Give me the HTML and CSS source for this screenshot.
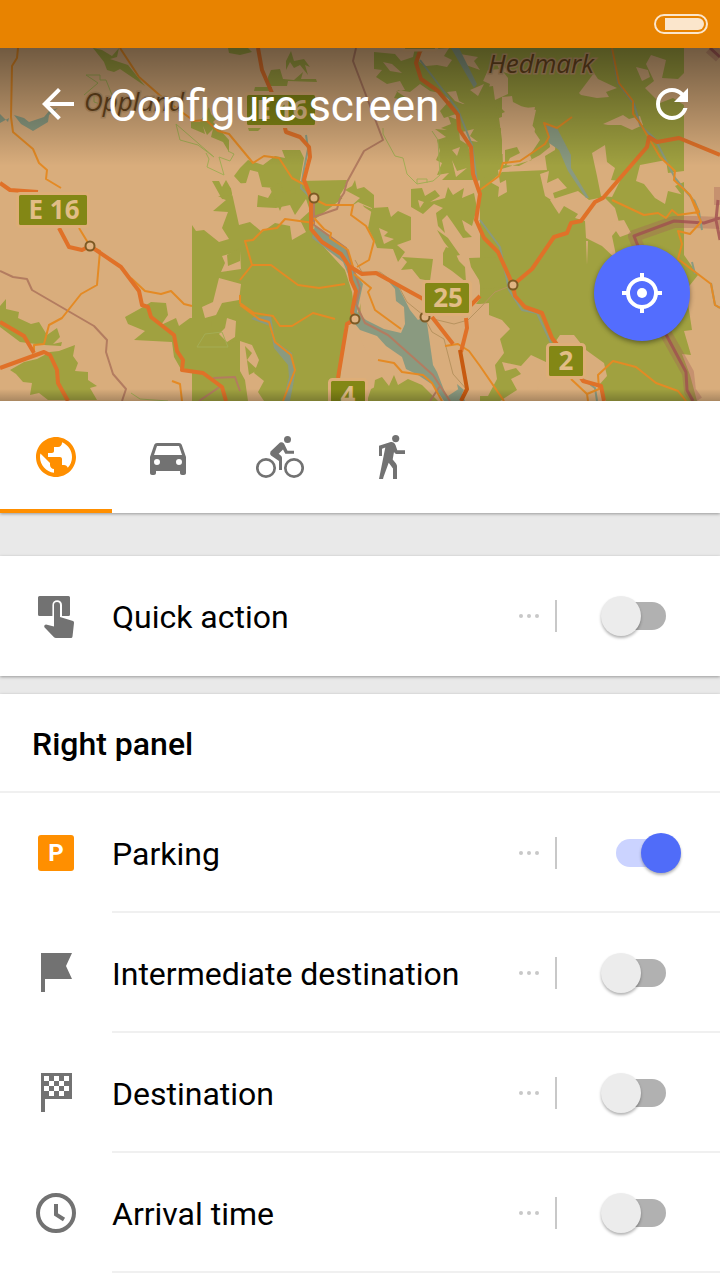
FILE: index.html
```html
<!DOCTYPE html>
<html lang="en">
<head>
<meta charset="utf-8">
<meta name="viewport" content="width=device-width, initial-scale=1">
<title>Configure screen</title>
<link rel="stylesheet" href="styles.css">
</head>
<body>
<div class="status-bar">
  <svg class="battery" viewBox="0 0 54 20" aria-hidden="true"><rect x="1" y="1" width="52" height="18" rx="9" fill="none" stroke="currentColor" stroke-width="2"/><path d="M11 4H44a6 6 0 0 1 0 12H11z" fill="currentColor"/></svg>
</div>
<header class="hero">
  <svg class="map" viewBox="0 48 720 353" preserveAspectRatio="xMidYMid slice" aria-hidden="true">
    <defs>
      <linearGradient id="shade" x1="0" y1="0" x2="0" y2="1"><stop offset="0" stop-opacity=".48"/><stop offset="1" stop-opacity="0"/></linearGradient>
      <linearGradient id="edge" x1="0" y1="0" x2="0" y2="1"><stop offset="0" stop-opacity="0"/><stop offset="1" stop-opacity=".22"/></linearGradient>
    </defs>
    <rect class="land" y="48" width="720" height="353"/>
    <g class="forest">
      <path d="M93 48L102 50 112 56 119 48 117 57 110 59 128 65 145 86 120 69 114 72 107 70 104 62zM228 48H248L252 52 240 55 229 53zM268 77L271 70 280 69 283 79 294 80 303 72 301 79 316 79 317 82 288 81 287 86 268 86zM286 61L291 51 294 61 304 59 310 67 305 65 308 75 300 65 294 68 290 62 286 70zM255 87H272V91H254zM248 128H261L258 131H249zM191 122L200 122 209 107 211 114 216 119 213 122 229 140V152L223 142 211 137 213 129 207 135 203 126 205 134 191 128zM212 181L219 181 222 187 226 180 233 192 230 200 222 199z"/>
      <path d="M240 168L248 160 263 165 275 156 285 158 282 150 300 150 304 158 300 181 347 180 345 187 340 195 344 201 355 202 372 209 374 240 345 270 376 330 396 401H192V225L196 231 204 230 219 242 229 239 222 228 228 212 213 211 226 200 218 196 238 195 228 188 244 187 234 176z"/>
      <path d="M480 48H684V255L698 275 686 290 692 330 684 331 691 355 682 354 690 375 697 401H480zM125 317L143 307 151 302 166 303 168 315 161 325 176 318 179 326 190 318 211 318 213 338 244 343V401H192V371L182 371 174 357 172 342 134 340 145 331 128 324zM0 306L6 299 6 309 19 312 18 318 31 324 39 322 47 335 57 328 60 337 53 344 62 342 61 346 44 345 20 342 0 327zM10 370L24 362 37 359 50 352 59 351 75 345 73 356 78 363 75 371 88 372 88 380 97 386 90 388 97 400H48L39 393 30 395 32 383 23 382 16 374z"/>
    </g>
    <g class="clearing">
      <path d="M343 198L349 199 354 190 364 207 390 224 400 245 387 273 372 274 365 290 355 322 361 328 384 341 411 363 402 374 391 382 380 379 379 385 371 389 367 401H338L345 325 355 314 352 292 345 270 313 235 314 220z"/>
      <path d="M360 272H407L426 283 424 310 460 320 470 352 450 401H390L361 340z"/>
      <path d="M480 304L489 303 489 315 502 320 510 329 500 339 504 353 495 365 497 379 488 396 480 396zM502 97L512 96 513 102 525 108 535 107 533 117 526 117 535 129 533 144 525 143 520 157 502 154zM488 70L501 69 508 78 508 94 495 100 493 86 480 88zM547 170L545 156 555 150 557 129 549 140 550 147 540 155 519 166 503 165 502 140 499 118 510 114 505 102 536 110 532 128 540 140 530 155 532 160 498 170 500 183 506 180 507 192 498 197 499 187 490 182 502 172zM579 93L594 73 598 79 617 88 606 92 609 97 597 98 581 95zM603 124L623 115 629 119 640 116 643 125 632 130 621 125 608 125zM651 55L666 60 662 78 678 79 684 73V105L673 98 660 103 645 88 654 81 646 64zM592 153L605 145 607 162 615 168 611 180 620 181 612 197 601 196 597 176zM540 174L549 171 547 183 558 178 567 188 553 193 556 203 545 196zM550 200L578 191 589 200 604 197 615 208 620 226 612 236 617 260 602 246 586 238 585 221 575 218 578 214 564 206 559 214 555 208zM640 165L666 160 668 173 684 171V195L668 191 665 204 655 198 644 184 636 181zM500 401L517 390 511 379 521 374 516 368 505 371 502 362 521 366 531 355 546 362 551 348 560 335 574 335 586 350 604 363 607 376 599 385 606 401z"/>
      <path d="M222 256L240 251 241 269 221 272 225 263zM219 278L241 284 239 300 222 303 216 315 205 318 202 307 213 302zM230 184L246 183 250 170 258 172 262 187 274 188 268 198 258 195 257 207 276 208 290 205 295 215 306 199 310 211 300 220 306 232 292 240 290 226 275 223 262 232 250 222 239 225zM240 341L252 345 259 360 254 373 264 381 258 392 264 401 248 401 245 380 240 371zM227 318L236 321 235 337 227 342 219 334 225 328z"/>
      <path d="M610 222L624 220 631 233 620 237zM586 241L587 265 588 241zM554 354L547 373 536 392 545 364zM636 67L648 70 650 77 642 81z"/>
    </g>
    <g class="forest">
      <path d="M374 52L395 54 401 61 413 57 415 48H481V80L490 84 487 94 480 92 481 109H474L459 101 456 91 447 92 455 101 463 104 480 105 502 109 505 112 495 116 498 127 490 130 501 128 499 151 502 161 493 172 482 180 475 181 470 150 458 128 456 114 444 118 440 111 450 100 440 93 430 91 420 84 410 92 398 90 394 98 413 102 396 91 405 90 400 81 387 84 376 77 382 70 374 69z"/>
      <path d="M441 128L451 124 448 116 458 120 460 140 468 145 473 166 475 180H442L449 173 437 175 442 163 436 160 440 151 437 140 446 137 435 129 447 130zM411 189L422 188 425 196 435 190 440 196 430 202 445 198 448 187 453 195 464 188 462 198 474 193 477 208 472 226 462 220 465 230 472 237 463 238 452 222 447 215 442 220 445 233 438 226 436 213 443 208 434 204 423 214 411 207zM443 253L446 247 454 250 459 261 465 267 466 282 452 271 443 265zM437 230L448 238 460 255 455 256 444 242zM345 190L352 186 355 180 357 189 364 187 374 195V209L358 202 350 207 360 198zM372 208L388 207 391 217 398 211 411 217V240L397 245 405 252 398 262 393 249 377 248 374 240 368 228zM402 257L433 259 430 281 420 279 412 269 401 270 407 262zM469 258L498 257 509 287 480 289V304H476L482 296 479 280 471 267zM372 401L375 380 382 377 389 386 394 375 398 385 408 379 422 385 438 401z"/>
      <path d="M505 150L517 147 520 153 510 158 505 168zM631 105L641 110 632 113zM675 186L684 182V198zM609 150L618 150 613 158zM245 346L252 353 247 360 258 370 249 375zM227 255L240 248V261L228 266zM270 188L281 182 283 193 295 188 296 204 284 200 280 211z"/>
    </g>
    <g class="clearing">
      <path d="M416 58L424 50 449 48 444 56 452 60 447 67 437 65 426 66 421 63zM460 54L478 57 474 61 480 70 466 65zM383 62L392 64 402 73 390 71zM462 132L474 129 470 136 478 142 466 140zM452 150L460 147 457 156zM452 160L457 171 467 168 456 177zM496 62L506 60 503 65 510 74 500 71zM470 90L484 84 478 96zM379 228L388 232 384 236 394 239 384 244zM418 200L424 202 420 208z"/>
    </g>
    <path class="water" d="M0 114L8 122 9 118 0 123zM14 115L24 118 29 122 44 117 49 111 58 108 49 115 48 122 33 131 21 124zM546 125L557 128 571 155V168L589 198 586 198 568 171 559 150 549 143zM451 48H459L477 84 474 88zM315 225L347 248 354 271 363 284 357 312 366 320 384 329 401 333 405 324 404 307 396 301 395 289 389 282 397 284 410 310 418 320 426 316 433 365 437 372 446 395 452 401 444 401 433 385 418 375 406 369 402 357 386 346 377 336 360 330 351 319 355 291 343 262 312 238zM254 317L271 316 275 341 292 353 295 375 290 401H283L289 377 288 365 274 348 270 326 251 319zM457 384L464 390 460 398zM448 396L460 388 465 401H450z"/>
    <g class="hairline">
      <path d="M84 95L98 83 86 75H100V80L106 80 112 95M94 96L94 102 100 104M176 124L214 157 198 145 180 140zM206 153L209 159 207 167 224 175 219 157 230 161 234 154 228 151M383 128V134L395 156 403 158 407 174 417 184 433 181 440 175 438 140 432 131M417 184V179H427V183M131 393L140 399 168 401M197 347L205 334 222 332 228 347z"/>
    </g>
    <g class="border-halo"><path d="M710 48L720 57M720 223L695 222 674 222 634 236 642 256 661 325 688 373 690 391 697 401M720 187V205"/></g>
    <g class="border-line"><path d="M710 48L720 57M720 218L704 223 674 221 634 236 642 256 661 325 686 372 687 390 693 401M718 200L716 220 720 240"/></g>
    <g class="rail">
      <path d="M356 48L353 61 383 140 364 151 347 182 344 193 340 199 337 209 314 217M0 271L13 277 27 279 32 290 94 326 107 340 106 352 113 374 126 389 122 401M213 378L235 377 240 391M221 386L199 401M314 198L314 225 346 248 360 288 356 304 365 323 388 335 433 375 450 401M430 401L440 386"/>
    </g>
    <g class="track"><path d="M355 260L362 272 380 272 398 285 407 302 423 315 432 332 444 339 453 374 468 391M425 317L454 324 468 320 480 308 495 292 513 285"/></g>
    <g class="stream"><path d="M306 135L308 149 304 169 301 188 312 199M480 220L500 247 509 290 522 310 537 313 551 343M612 50L618 83 634 104 640 125 655 139 675 178 694 201M692 262L695 274M711 283L715 305 720 308M694 200L699 212 702 230M571 370L595 388 597 401M420 60L458 110 472 145 478 190"/></g>
    <g class="minor">
      <path d="M18 48L17 58 12 66 11 117 13 132 33 149 39 163 47 170 46 179 61 188M120 48L139 77 164 99 194 121 206 120 218 131 229 134 253 163 264 156 279 158 292 178 305 185M79 228L90 246 100 251 97 285 81 294 62 318 49 325 44 344 34 345 34 352M131 278L145 291 161 294 171 291 184 304 192 306M172 381L180 384 182 401M240 295V303L254 313 273 316 280 326 292 326 313 313 335 319M240 280L252 265 271 265 298 285 319 288 345 284M252 265L245 241 253 240 263 230 277 228 285 219 314 223M314 199L326 205H353L351 215 366 226 374 241 369 260 357 267M314 218L324 229 331 233 330 238 348 250 354 270M354 274L371 288 368 292 375 310 401 329M240 305L259 319 269 322 275 342 291 355 295 370 283 401M378 360L394 363 402 372 423 375 432 383 442 401M445 346L458 344 469 351 480 366 504 401M480 190L499 176 503 163 520 161 545 144 549 137 544 123 557 128 572 117M612 48L619 83 633 101 633 114 640 123 660 157 675 171 674 180 690 195 701 222 690 234 678 231 682 244 678 259 711 284 715 305 720 308M612 200L644 215 658 213 666 218 672 210 678 215 699 212 690 195M571 379L587 394 599 389 598 375 613 361 636 367 656 383 678 391 686 401M587 394L588 401"/>
    </g>
    <g class="major">
      <path d="M0 183L10 190 38 192M258 48L262 70 282 116 286 132 300 137 309 147 310 157 304 180 311 198V229L322 242 341 254 349 266 362 274 376 273 425 300M349 267L351 280 356 291 352 312 355 319 347 324 338 378M59 228L69 247 82 250 90 246 121 267 139 291 142 305 148 307 151 317 174 335 177 351 183 360 182 370 203 373 222 387 226 401M0 322L24 336 34 353M0 368L44 352 50 355 57 370 58 383 68 401M421 48L416 63 421 79 438 91 458 115 459 129 471 147 473 174 480 194 476 220 484 238 498 252 513 285 515 296 525 307 542 313 552 338 570 361 583 381 601 386 604 401M513 285L532 269 554 237 567 233 571 223 581 221 595 202 603 198 647 147 649 137 657 142 679 138 720 155M480 296L469 307M432 317L453 344M466 318L467 328 461 352"/>
    </g>
    <path class="trunk" d="M460 350L467 389 461 401"/>
    <g class="nodes"><circle cx="314" cy="198" r="4.5"/><circle cx="90" cy="246" r="4.5"/><circle cx="513" cy="285" r="4.5"/><circle cx="355" cy="319" r="4.5"/><circle cx="425" cy="317" r="4.5"/></g>
    <g class="signs"><rect x="17.500" y="193.500" width="71" height="33" rx="3"/><rect x="245.500" y="93.500" width="71" height="33" rx="3"/><rect x="423.500" y="281.500" width="47" height="33" rx="3"/><rect x="329.500" y="379.500" width="37" height="33" rx="3"/><rect x="547.500" y="344.500" width="37" height="33" rx="3"/><rect x="403" y="18" width="34" height="32" rx="3"/></g>
    <g class="sign-text"><text x="54" y="219">E 16</text><text x="282" y="119">E 16</text><text x="448" y="307">25</text><text x="348" y="405">4</text><text x="566" y="370">2</text></g>
    <g class="region"><text x="84" y="111">Oppland</text><text x="488" y="73">Hedmark</text></g>
    <rect y="48" width="720" height="118" fill="url(#shade)"/>
    <rect y="389" width="720" height="12" fill="url(#edge)"/>
  </svg>
  <div class="toolbar">
    <button class="tool" type="button" aria-label="Back"><svg class="icon" viewBox="0 0 24 24"><path d="M20 11H7.830l5.590-5.590L12 4l-8 8 8 8 1.410-1.410L7.830 13H20z"/></svg></button>
    <h1 class="title">Configure screen</h1>
    <button class="tool" type="button" aria-label="Reset"><svg class="icon" viewBox="0 0 24 24"><path d="M17.650 6.350C16.200 4.900 14.210 4 12 4c-4.420 0-7.990 3.580-7.990 8s3.570 8 7.990 8c3.730 0 6.840-2.550 7.730-6h-2.080c-.82 2.330-3.040 4-5.650 4-3.310 0-6-2.690-6-6s2.690-6 6-6c1.660 0 3.140.69 4.220 1.780L13 11h7V4z"/></svg></button>
  </div>
  <button class="locate" type="button" aria-label="My location"><svg class="icon" viewBox="0 0 48 48"><circle cx="24" cy="24" r="14" fill="none" stroke="currentColor" stroke-width="4"/><circle cx="24" cy="24" r="5"/><path d="M22 4h4v7h-4zM22 37h4v7h-4zM4 22h7v4H4zM37 22h7v4h-7z"/></svg></button>
</header>
<main class="content">
  <nav class="tabs" aria-label="Profiles">
    <button class="tab tab-active" type="button" aria-label="Browse map"><svg class="icon" viewBox="0 0 24 24"><path d="M12 2C6.480 2 2 6.480 2 12s4.480 10 10 10 10-4.480 10-10S17.520 2 12 2zm-1 17.930c-3.950-.49-7-3.850-7-7.930 0-.62.08-1.210.21-1.790L9 15v1c0 1.100.9 2 2 2v1.930zm6.900-2.540c-.26-.81-1-1.390-1.900-1.390h-1v-3c0-.55-.45-1-1-1H8v-2h2c.55 0 1-.45 1-1V7h2c1.100 0 2-.9 2-2v-.41c2.930 1.190 5 4.060 5 7.410 0 2.080-.8 3.970-2.100 5.390z"/></svg></button>
    <button class="tab" type="button" aria-label="Car"><svg class="icon" viewBox="0 0 24 24"><path fill-rule="evenodd" d="M18.920 6.010C18.720 5.420 18.160 5 17.500 5h-11c-.66 0-1.210.42-1.420 1.010L3 12v8c0 .55.45 1 1 1h1c.55 0 1-.45 1-1v-1h12v1c0 .55.45 1 1 1h1c.55 0 1-.45 1-1v-8zM6.500 16a1.500 1.500 0 1 1 0-3 1.500 1.500 0 0 1 0 3zm11 0a1.500 1.500 0 1 1 0-3 1.500 1.500 0 0 1 0 3zM5 11l1.500-4.500h11L19 11z"/></svg></button>
    <button class="tab" type="button" aria-label="Bicycle"><svg class="icon" viewBox="0 0 48 48"><circle cx="31.500" cy="6.500" r="3.500"/><g fill="none" stroke="currentColor" stroke-width="2.700"><circle cx="10" cy="35" r="8.700"/><circle cx="38" cy="35" r="8.700"/></g><path d="M24 9.500Q26 8.500 28 10.500L31.500 17.800H38V20.800H29.300L27 16.500 22.700 20.700 25 22.700Q26 23.500 26 25V37H23V28L15 22.500Q13.500 21 14.500 18.500z"/></svg></button>
    <button class="tab" type="button" aria-label="Walking"><svg class="icon" viewBox="0 0 48 48"><circle cx="27.700" cy="5.600" r="3.600"/><path d="M11 12.700L22.700 9Q26 8.500 27.500 12L29.300 17.200H37V21H28.500Q27 21 26 19L24.700 26.500 28 30.500Q29 32 29 33V46H25V35.500L20.700 29.700 15.500 44 15 46H11L17.300 14.500 14 15.700V23H11z"/></svg></button>
  </nav>
  <section class="card card-single">
    <div class="row">
      <svg class="icon" viewBox="0 0 48 48" aria-hidden="true"><path d="M7.500 4H36.500Q38 4 38 5.500V22.500Q38 24 36.500 24H30V13a4.800 4.800 0 0 0-9.600 0V24H7.500Q6 24 6 22.500V5.500Q6 4 7.500 4z"/><path d="M22 13a3 3 0 0 1 6 0V25L41 29Q42.300 29.500 42 31L40.500 44.500Q40.300 46 39 46H24Q22.700 46 22 45.200L12.400 35.300Q11.800 34 12.800 33L14 32.500 22 34.500z"/></svg>
      <label class="name" for="quick">Quick action</label>
      <button class="more" type="button" aria-label="Quick action options"><span class="dot"></span><span class="dot"></span><span class="dot"></span></button>
      <input class="switch" id="quick" type="checkbox" role="switch">
    </div>
  </section>
  <section class="card card-list">
    <h2 class="heading">Right panel</h2>
    <div class="row">
      <span class="parking" aria-hidden="true">P</span>
      <label class="name" for="parking">Parking</label>
      <button class="more" type="button" aria-label="Parking options"><span class="dot"></span><span class="dot"></span><span class="dot"></span></button>
      <input class="switch" id="parking" type="checkbox" role="switch" checked>
    </div>
    <div class="row">
      <svg class="icon" viewBox="0 0 48 48" aria-hidden="true"><path d="M9 4H40L34 17 40 30H13V43H9z"/></svg>
      <label class="name" for="intermediate">Intermediate destination</label>
      <button class="more" type="button" aria-label="Intermediate destination options"><span class="dot"></span><span class="dot"></span><span class="dot"></span></button>
      <input class="switch" id="intermediate" type="checkbox" role="switch">
    </div>
    <div class="row">
      <svg class="icon" viewBox="0 0 48 48" aria-hidden="true"><path fill-rule="evenodd" d="M9 4H40V30H13V43H9zM12 7v5h5V7zM22 7v5h5V7zM32 7v5h5V7zM17 12v5h5v-5zM27 12v5h5v-5zM12 17v5h5v-5zM22 17v5h5v-5zM32 17v5h5v-5zM17 22v5h5v-5zM27 22v5h5v-5z"/></svg>
      <label class="name" for="destination">Destination</label>
      <button class="more" type="button" aria-label="Destination options"><span class="dot"></span><span class="dot"></span><span class="dot"></span></button>
      <input class="switch" id="destination" type="checkbox" role="switch">
    </div>
    <div class="row">
      <svg class="icon" viewBox="0 0 48 48" aria-hidden="true"><g fill="none" stroke="currentColor" stroke-width="4"><circle cx="24" cy="24" r="18"/><path d="M24 15V25.500L32 30.500"/></g></svg>
      <label class="name" for="arrival">Arrival time</label>
      <button class="more" type="button" aria-label="Arrival time options"><span class="dot"></span><span class="dot"></span><span class="dot"></span></button>
      <input class="switch" id="arrival" type="checkbox" role="switch">
    </div>
  </section>
</main>
</body>
</html>
```
FILE: styles.css
```css
* { box-sizing: border-box; }
body {
  display: flex;
  flex-direction: column;
  margin: 0;
  min-height: 100vh;
  background: #fff;
  color: #000;
  font-family: Roboto, "Noto Sans", sans-serif;
  font-size: 32px;
  line-height: 40px;
}
button {
  margin: 0;
  padding: 0;
  border: 0;
  background: none;
  color: inherit;
  font: inherit;
  cursor: pointer;
}
.icon { display: block; width: 48px; height: 48px; fill: currentColor; }

.status-bar {
  display: flex;
  align-items: center;
  justify-content: flex-end;
  flex-shrink: 0;
  height: 48px;
  padding: 0 12px;
  background: #e88300;
  color: #fbe6cc;
}
.battery { width: 54px; height: 20px; }

.hero { position: relative; flex-shrink: 0; height: 353px; overflow: hidden; }
.map { position: absolute; inset: 0; width: 100%; height: 100%; }
.toolbar {
  position: relative;
  display: flex;
  align-items: center;
  gap: 26px;
  height: 112px;
  padding: 0 24px 0 34px;
  color: #fff;
}
.title { flex: 1; margin: 0; padding-top: 4px; font-size: 44px; font-weight: 400; line-height: 52px; }
.locate {
  position: absolute;
  right: 30px;
  bottom: 60px;
  display: grid;
  place-items: center;
  width: 96px;
  height: 96px;
  border-radius: 50%;
  background: #536dfe;
  color: #fff;
  box-shadow: 0 2px 5px rgba(0, 0, 0, .4);
}

.land { fill: #d9ad7c; }
.forest { fill: #a0a140; }
.clearing { fill: #d9ad7c; }
.water { fill: #8a9a80; }
.hairline, .rail, .track, .stream, .minor, .major, .trunk, .border-line, .border-halo {
  fill: none;
  stroke-linejoin: round;
}
.hairline { stroke: #a4ad55; stroke-width: 1; }
.rail { stroke: #b37c60; stroke-width: 2; }
.track { stroke: #b8935f; stroke-width: 1; }
.stream { stroke: #8a9a80; stroke-width: 2; }
.minor { stroke: #e48a24; stroke-width: 2; }
.major { stroke: #e07128; stroke-width: 4; }
.trunk { stroke: #c75a10; stroke-width: 4; }
.border-halo { stroke: #a45f58; stroke-width: 12; opacity: .35; }
.border-line { stroke: #a04f50; stroke-width: 3; opacity: .8; }
.nodes { fill: #e0b483; stroke: #7d5a24; stroke-width: 2; }
.signs { fill: #838715; stroke: #deae78; stroke-width: 3; }
.sign-text {
  fill: #e2bd86;
  font: 700 26px "Open Sans", "Noto Sans", sans-serif;
  text-anchor: middle;
}
.region {
  fill: #6b471d;
  stroke: #c49b6c;
  stroke-width: 3;
  paint-order: stroke;
  font: italic 400 26px "Open Sans", "Noto Sans", sans-serif;
}

.content {
  display: flex;
  flex: 1;
  flex-direction: column;
  background: #e9e9e9;
}
.tabs {
  display: flex;
  height: 112px;
  background: #fff;
  color: #727272;
}
.tab {
  display: grid;
  place-items: center;
  width: 112px;
  border-top: 4px solid transparent;
  border-bottom: 4px solid transparent;
}
.tab-active { border-bottom-color: #ff8f00; color: #ff8f00; }

.tabs, .card { box-shadow: 0 1px 3px rgba(0, 0, 0, .35); }
.card { background: #fff; }
.card-single { margin: 43px 0 18px; }
.card-list { flex: 1; }
.heading {
  margin: 0;
  padding: 30px 32px 27px;
  border-bottom: 2px solid #f0f0f0;
  font-size: 32px;
  font-weight: 500;
}
.row {
  position: relative;
  display: grid;
  grid-template-columns: 48px 1fr 38px 124px;
  align-items: center;
  height: 120px;
  padding: 0 39px 0 32px;
  color: #727272;
}
.card-list .row::after {
  content: "";
  position: absolute;
  right: 0;
  bottom: 0;
  left: 112px;
  height: 2px;
  background: #f0f0f0;
}
.name { padding: 2px 0 0 32px; color: #000; }
.parking {
  justify-self: center;
  width: 36px;
  height: 36px;
  border-radius: 3px;
  background: #ff8f00;
  color: #fff;
  font-size: 24px;
  font-weight: 700;
  line-height: 36px;
  text-align: center;
}
.more {
  display: flex;
  align-items: center;
  gap: 4px;
  height: 32px;
  border-right: 2px solid #c8c8c8;
}
.dot { width: 4px; height: 4px; border-radius: 50%; background: #c8c8c8; }
.switch {
  position: relative;
  justify-self: end;
  width: 80px;
  height: 40px;
  margin: 0;
  appearance: none;
  cursor: pointer;
}
.switch::before {
  content: "";
  position: absolute;
  top: 6px;
  left: 15px;
  width: 50px;
  height: 28px;
  border-radius: 14px;
  background: #b1b1b1;
}
.switch::after {
  content: "";
  position: absolute;
  top: 0;
  left: 0;
  width: 40px;
  height: 40px;
  border-radius: 50%;
  background: #ececec;
  box-shadow: 0 2px 3px rgba(0, 0, 0, .3);
}
.switch:checked::before { background: #cbd3ff; }
.switch:checked::after { left: 40px; background: #506cf9; }
```
